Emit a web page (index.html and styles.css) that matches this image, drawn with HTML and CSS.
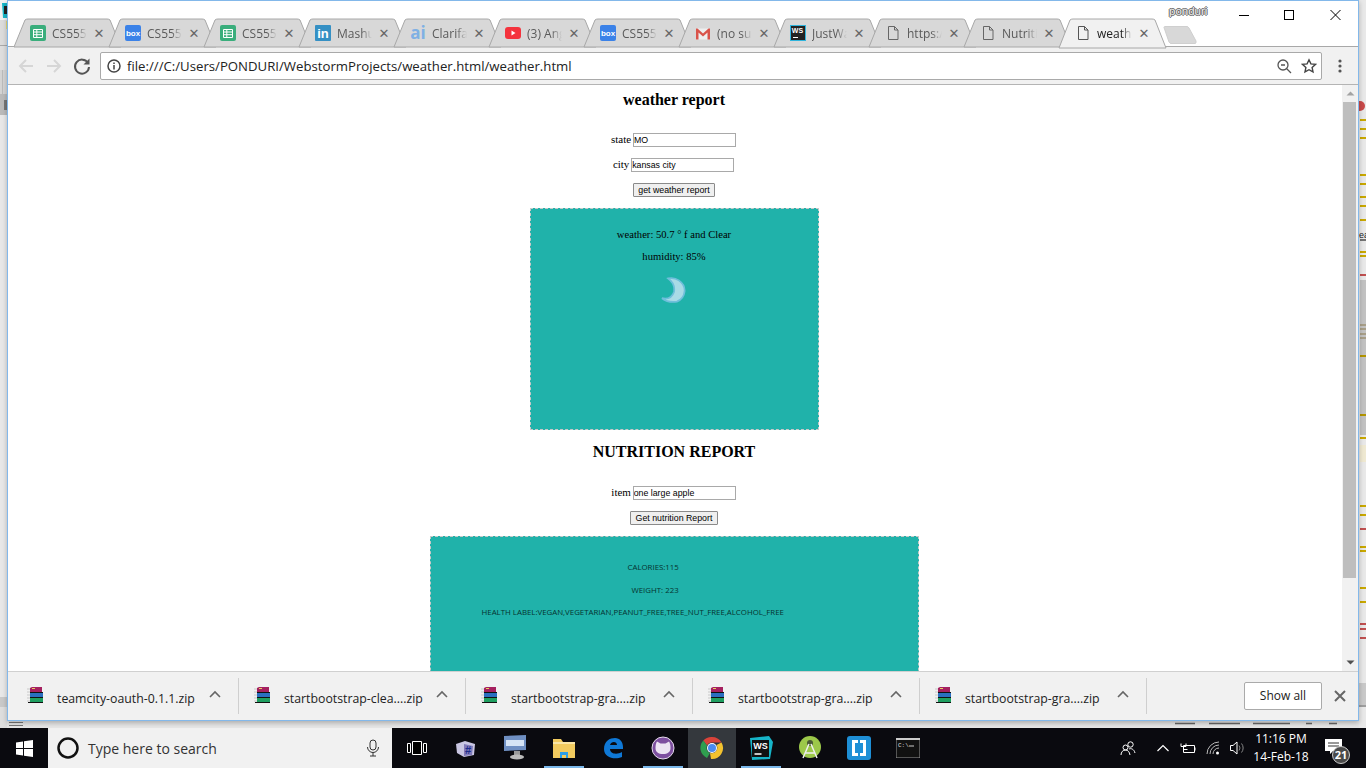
FILE: index.html
```html
<!DOCTYPE html>
<html lang="en">
<head>
<meta charset="utf-8">
<title>weather report</title>
<link rel="stylesheet" href="styles.css">
</head>
<body>
<div class="desktop">
  <svg class="left-strip" width="7" height="728" viewBox="0 0 7 728">
    <rect width="7" height="728" fill="#e8e8e8"/>
    <rect width="7" height="20" fill="#f2f2f2"/>
    <path d="M2 3h5v15H3z" fill="#17b6c9"/><rect x="4" y="6" width="3" height="8" fill="#222"/>
    <rect y="20" width="7" height="25" fill="#dcdcdc"/><rect x="6" y="21" width="1" height="8" fill="#e8d97a"/>
    <rect y="45" width="7" height="1" fill="#a9a9a9"/>
    <rect y="46" width="7" height="24" fill="#dedede"/>
    <rect y="70" width="7" height="24" fill="#d4d4d4"/><rect x="2" y="70" width="1" height="24" fill="#bbb"/>
    <rect y="94" width="7" height="21" fill="#bababa"/><rect x="4" y="100" width="3" height="10" fill="#777"/>
    <rect y="697" width="7" height="10" fill="#c9c9c9"/>
    <rect y="707" width="7" height="21" fill="#dedede"/>
  </svg>
  <div class="window">
    <div class="tabstrip">
      <div class="profile">ponduri</div>
      <div class="winctl">
        <svg width="124" height="16" viewBox="0 0 124 16"><path d="M5 8.500h10" stroke="#000" fill="none"/><rect x="50.500" y="3.500" width="9" height="9" stroke="#000" fill="none"/><path d="M96.500 3l10 10M106.500 3l-10 10" stroke="#000" fill="none"/></svg>
      </div>
      <div class="tab"><svg class="shape" viewBox="0 0 107 28"><path d="M0 28 L11 1 Q12 0 14 0 H93 Q95 0 96 1 L107 28Z" fill="#d8d8d8" stroke="#a8a8a8"/></svg>
        <svg class="fav" viewBox="0 0 16 16"><rect width="16" height="16" rx="2" fill="#3aae7c"/><path d="M3.500 4.500h9v8h-9zM3.500 7h9M3.500 9.700h9M6.800 4.500v8" fill="none" stroke="#fff"/></svg><span class="ttl">CS555</span><span class="x">✕</span></div>
      <div class="tab"><svg class="shape" viewBox="0 0 107 28"><path d="M0 28 L11 1 Q12 0 14 0 H93 Q95 0 96 1 L107 28Z" fill="#d8d8d8" stroke="#a8a8a8"/></svg>
        <svg class="fav" viewBox="0 0 16 16"><rect width="16" height="16" rx="2" fill="#3b82e8"/><text x="8" y="11" class="favt">box</text></svg><span class="ttl">CS555</span><span class="x">✕</span></div>
      <div class="tab"><svg class="shape" viewBox="0 0 107 28"><path d="M0 28 L11 1 Q12 0 14 0 H93 Q95 0 96 1 L107 28Z" fill="#d8d8d8" stroke="#a8a8a8"/></svg>
        <svg class="fav" viewBox="0 0 16 16"><rect width="16" height="16" rx="2" fill="#3aae7c"/><path d="M3.500 4.500h9v8h-9zM3.500 7h9M3.500 9.700h9M6.800 4.500v8" fill="none" stroke="#fff"/></svg><span class="ttl">CS555</span><span class="x">✕</span></div>
      <div class="tab"><svg class="shape" viewBox="0 0 107 28"><path d="M0 28 L11 1 Q12 0 14 0 H93 Q95 0 96 1 L107 28Z" fill="#d8d8d8" stroke="#a8a8a8"/></svg>
        <svg class="fav" viewBox="0 0 16 16"><rect width="16" height="16" rx="1" fill="#3590c4"/><text x="8" y="13" class="favin">in</text></svg><span class="ttl">Mashu</span><span class="x">✕</span></div>
      <div class="tab"><svg class="shape" viewBox="0 0 107 28"><path d="M0 28 L11 1 Q12 0 14 0 H93 Q95 0 96 1 L107 28Z" fill="#d8d8d8" stroke="#a8a8a8"/></svg>
        <svg class="fav" viewBox="0 0 16 16"><text x="8" y="14" class="favai">ai</text></svg><span class="ttl">Clarifa</span><span class="x">✕</span></div>
      <div class="tab"><svg class="shape" viewBox="0 0 107 28"><path d="M0 28 L11 1 Q12 0 14 0 H93 Q95 0 96 1 L107 28Z" fill="#d8d8d8" stroke="#a8a8a8"/></svg>
        <svg class="fav" viewBox="0 0 16 16"><rect y="2" width="16" height="12" rx="3" fill="#f4333d"/><path d="M6.500 5.500l4 2.500-4 2.500z" fill="#fff"/></svg><span class="ttl">(3) Ang</span><span class="x">✕</span></div>
      <div class="tab"><svg class="shape" viewBox="0 0 107 28"><path d="M0 28 L11 1 Q12 0 14 0 H93 Q95 0 96 1 L107 28Z" fill="#d8d8d8" stroke="#a8a8a8"/></svg>
        <svg class="fav" viewBox="0 0 16 16"><rect width="16" height="16" rx="2" fill="#3b82e8"/><text x="8" y="11" class="favt">box</text></svg><span class="ttl">CS555</span><span class="x">✕</span></div>
      <div class="tab"><svg class="shape" viewBox="0 0 107 28"><path d="M0 28 L11 1 Q12 0 14 0 H93 Q95 0 96 1 L107 28Z" fill="#d8d8d8" stroke="#a8a8a8"/></svg>
        <svg class="fav" viewBox="0 0 16 16"><path d="M1 3.500h14v11H1z" fill="#eee"/><path d="M1 14.500V3.500h1.500L8 8.500l5.500-5H15v11h-2.500V7.500L8 11.500 3.500 7.500v7z" fill="#d9534a"/></svg><span class="ttl">(no sul</span><span class="x">✕</span></div>
      <div class="tab"><svg class="shape" viewBox="0 0 107 28"><path d="M0 28 L11 1 Q12 0 14 0 H93 Q95 0 96 1 L107 28Z" fill="#d8d8d8" stroke="#a8a8a8"/></svg>
        <svg class="fav" viewBox="0 0 16 16"><rect width="16" height="16" fill="#2fb5dd"/><rect x="1" y="1" width="14" height="14" fill="#222"/><text x="7.500" y="8" class="favws">WS</text><path d="M3 12.500h5" stroke="#fff"/></svg><span class="ttl">JustWa</span><span class="x">✕</span></div>
      <div class="tab"><svg class="shape" viewBox="0 0 107 28"><path d="M0 28 L11 1 Q12 0 14 0 H93 Q95 0 96 1 L107 28Z" fill="#d8d8d8" stroke="#a8a8a8"/></svg>
        <svg class="fav" viewBox="0 0 16 16"><path d="M3.500 1.500h6l3.500 3.500v9.500H3.500zM9.500 1.500V5H13" fill="none" stroke="#666"/></svg><span class="ttl">https:/</span><span class="x">✕</span></div>
      <div class="tab"><svg class="shape" viewBox="0 0 107 28"><path d="M0 28 L11 1 Q12 0 14 0 H93 Q95 0 96 1 L107 28Z" fill="#d8d8d8" stroke="#a8a8a8"/></svg>
        <svg class="fav" viewBox="0 0 16 16"><path d="M3.500 1.500h6l3.500 3.500v9.500H3.500zM9.500 1.500V5H13" fill="none" stroke="#666"/></svg><span class="ttl">Nutriti</span><span class="x">✕</span></div>
      <div class="tab active"><svg class="shape" viewBox="0 0 107 28"><path d="M0 29 L11 1 Q12 0 14 0 H93 Q95 0 96 1 L107 29Z" fill="#f1f1f1" stroke="#a8a8a8"/></svg>
        <svg class="fav" viewBox="0 0 16 16"><path d="M3.500 1.500h6l3.500 3.500v9.500H3.500zM9.500 1.500V5H13" fill="none" stroke="#555"/></svg><span class="ttl">weath</span><span class="x">✕</span></div>
      <svg class="newtab" width="36" height="19" viewBox="0 0 36 19"><path d="M2 1.500Q2 .500 3 .500H25Q26 .500 27 2L34 15Q34.500 17.500 33 17.500H9Q8 17.500 7 16Z" fill="#d8d8d8" stroke="#cfcfcf"/></svg>
    </div>
    <div class="toolbar">
      <svg class="navi" width="20" height="20" viewBox="0 0 20 20"><path d="M17 10H4M10 4l-6 6 6 6" fill="none" stroke="#d6d6d6" stroke-width="2"/></svg>
      <svg class="navi" width="20" height="20" viewBox="0 0 20 20"><path d="M3 10h13M10 4l6 6-6 6" fill="none" stroke="#d6d6d6" stroke-width="2"/></svg>
      <svg class="navi" width="20" height="20" viewBox="0 0 20 20"><path d="M16 7A7 7 0 1 0 17 11" fill="none" stroke="#555" stroke-width="2"/><path d="M17.500 2.500V8.500H11.500z" fill="#555"/></svg>
      <div class="omnibox">
        <svg width="16" height="16" viewBox="0 0 16 16"><circle cx="8" cy="8" r="6" fill="none" stroke="#444" stroke-width="1.500"/><path d="M8 7v4.500M8 4.500v1.500" stroke="#444" stroke-width="1.500"/></svg>
        <span class="url">file:///C:/Users/PONDURI/WebstormProjects/weather.html/weather.html</span>
        <svg class="zoomi" width="16" height="16" viewBox="0 0 16 16"><circle cx="7" cy="7" r="5" fill="none" stroke="#555" stroke-width="1.300"/><path d="M5 7h4M10.500 10.500L15 15" stroke="#555" stroke-width="1.300"/></svg>
        <svg width="16" height="16" viewBox="0 0 16 16"><path d="M8 1.800l1.900 4.100 4.500.500-3.300 3 .900 4.500L8 11.700l-4 2.200.900-4.500-3.300-3 4.500-.500z" fill="none" stroke="#444" stroke-width="1.400"/></svg>
      </div>
      <svg class="menu" width="4" height="16" viewBox="0 0 4 16"><circle cx="2" cy="3" r="1.600" fill="#555"/><circle cx="2" cy="8" r="1.600" fill="#555"/><circle cx="2" cy="13" r="1.600" fill="#555"/></svg>
    </div>
    <div class="viewport">
      <main class="page">
        <h3 class="title first">weather report</h3>
        <p class="field"><label>state</label> <input class="inp" value="MO"></p>
        <p class="field"><label>city</label> <input class="inp" value="kansas city"></p>
        <p class="field"><button class="btn">get weather report</button></p>
        <section class="panel weather">
          <p class="wline">weather: 50.7 ° f and Clear</p>
          <p class="wline">humidity: 85%</p>
          <svg class="moon" width="28" height="28" viewBox="0 0 28 28"><path d="M8 1.500Q14 0 19 3.500Q25.500 8 25 15Q24 23 17 25.500Q8 27 1.500 22Q11 24 14 15.500Q15.500 7 8 1.500Z" fill="#a9dbe6" stroke="#6fbfdb" stroke-width="1.800"/></svg>
        </section>
        <h3 class="title second">NUTRITION REPORT</h3>
        <p class="field item"><label>item</label> <input class="inp" value="one large apple"></p>
        <p class="field"><button class="btn">Get nutrition Report</button></p>
        <section class="panel nutrition">
          <p class="nline cal">CALORIES:115</p>
          <p class="nline wei">WEIGHT: 223</p>
          <p class="nline hea">HEALTH LABEL:VEGAN,VEGETARIAN,PEANUT_FREE,TREE_NUT_FREE,ALCOHOL_FREE</p>
        </section>
      </main>
      <div class="scrollbar">
        <svg width="17" height="17" viewBox="0 0 17 17"><path d="M4.500 10.500L8.500 6.500l4 4z" fill="#a3a3a3"/></svg>
        <div class="track"><div class="thumb"></div></div>
        <svg width="17" height="17" viewBox="0 0 17 17"><path d="M4.500 6.500h8l-4 4z" fill="#505050"/></svg>
      </div>
    </div>
    <div class="downloads">
      <div class="dl"><svg class="rar" width="16" height="16" viewBox="0 0 16 16"><path d="M3 1l2-1h10v5H3z" fill="#a5205f"/><path d="M5 1h3v1H5z" fill="#e8d060"/><path d="M3 6h13v4H3z" fill="#2a6fc0"/><path d="M3 11h13v4H3z" fill="#1f9f60"/><path d="M1 5.500h15M1 10.500h15M1 15.500h15" stroke="#111"/><path d="M1.500 1v14" stroke="#ddd" stroke-width="3" stroke-dasharray="2 1"/></svg><span class="dlname">teamcity-oauth-0.1.1.zip</span><svg class="chev" width="12" height="8" viewBox="0 0 12 8"><path d="M1 7l5-5 5 5" fill="none" stroke="#666" stroke-width="1.600"/></svg></div>
      <div class="dl"><svg class="rar" width="16" height="16" viewBox="0 0 16 16"><path d="M3 1l2-1h10v5H3z" fill="#a5205f"/><path d="M5 1h3v1H5z" fill="#e8d060"/><path d="M3 6h13v4H3z" fill="#2a6fc0"/><path d="M3 11h13v4H3z" fill="#1f9f60"/><path d="M1 5.500h15M1 10.500h15M1 15.500h15" stroke="#111"/><path d="M1.500 1v14" stroke="#ddd" stroke-width="3" stroke-dasharray="2 1"/></svg><span class="dlname">startbootstrap-clea....zip</span><svg class="chev" width="12" height="8" viewBox="0 0 12 8"><path d="M1 7l5-5 5 5" fill="none" stroke="#666" stroke-width="1.600"/></svg></div>
      <div class="dl"><svg class="rar" width="16" height="16" viewBox="0 0 16 16"><path d="M3 1l2-1h10v5H3z" fill="#a5205f"/><path d="M5 1h3v1H5z" fill="#e8d060"/><path d="M3 6h13v4H3z" fill="#2a6fc0"/><path d="M3 11h13v4H3z" fill="#1f9f60"/><path d="M1 5.500h15M1 10.500h15M1 15.500h15" stroke="#111"/><path d="M1.500 1v14" stroke="#ddd" stroke-width="3" stroke-dasharray="2 1"/></svg><span class="dlname">startbootstrap-gra....zip</span><svg class="chev" width="12" height="8" viewBox="0 0 12 8"><path d="M1 7l5-5 5 5" fill="none" stroke="#666" stroke-width="1.600"/></svg></div>
      <div class="dl"><svg class="rar" width="16" height="16" viewBox="0 0 16 16"><path d="M3 1l2-1h10v5H3z" fill="#a5205f"/><path d="M5 1h3v1H5z" fill="#e8d060"/><path d="M3 6h13v4H3z" fill="#2a6fc0"/><path d="M3 11h13v4H3z" fill="#1f9f60"/><path d="M1 5.500h15M1 10.500h15M1 15.500h15" stroke="#111"/><path d="M1.500 1v14" stroke="#ddd" stroke-width="3" stroke-dasharray="2 1"/></svg><span class="dlname">startbootstrap-gra....zip</span><svg class="chev" width="12" height="8" viewBox="0 0 12 8"><path d="M1 7l5-5 5 5" fill="none" stroke="#666" stroke-width="1.600"/></svg></div>
      <div class="dl"><svg class="rar" width="16" height="16" viewBox="0 0 16 16"><path d="M3 1l2-1h10v5H3z" fill="#a5205f"/><path d="M5 1h3v1H5z" fill="#e8d060"/><path d="M3 6h13v4H3z" fill="#2a6fc0"/><path d="M3 11h13v4H3z" fill="#1f9f60"/><path d="M1 5.500h15M1 10.500h15M1 15.500h15" stroke="#111"/><path d="M1.500 1v14" stroke="#ddd" stroke-width="3" stroke-dasharray="2 1"/></svg><span class="dlname">startbootstrap-gra....zip</span><svg class="chev" width="12" height="8" viewBox="0 0 12 8"><path d="M1 7l5-5 5 5" fill="none" stroke="#666" stroke-width="1.600"/></svg></div>
      <div class="dlright">
        <div class="showall">Show all</div>
        <svg width="12" height="12" viewBox="0 0 12 12"><path d="M1 1l10 10M11 1L1 11" stroke="#666" stroke-width="2"/></svg>
      </div>
    </div>
  </div>
  <svg class="right-strip" width="7" height="728" viewBox="0 0 7 728">
    <rect width="7" height="728" fill="#e9e9e9"/>
    <circle cx="1" cy="106" r="5" fill="#c94a4a"/>
    <path d="M1 120h6M1 129h6M1 138h6M1 175h6M1 184h6M1 197h6M1 206h6M1 220h6M1 252h6M1 256h6M1 438h6M1 506h6M1 515h6M1 547h6M1 551h6M1 588h6M1 602h6" stroke="#c9a800" stroke-width="2"/>
    <path d="M1 275h6M1 529h6M1 624h6M1 629h6M1 638h6" stroke="#c05050" stroke-width="2"/>
    <rect x="1" y="280" width="6" height="155" fill="#c2c2c2"/>
    <path d="M1 325h6M1 329h6M1 334h6M1 338h6" stroke="#a89f88" stroke-width="2"/>
    <path d="M1 356h6M1 415h6" stroke="#b39500" stroke-width="2"/>
    <rect x="1" y="445" width="6" height="17" fill="#efe9d2"/>
    <path d="M1 240h6" stroke="#000" stroke-width="1"/>
    <text x="0" y="238" class="striptxt">ea</text>
    <rect y="683" width="7" height="22" fill="#c9c9c9"/>
    <path d="M0 706h7" stroke="#555"/>
  </svg>
  <svg class="under" width="1366" height="7" viewBox="0 0 1366 7">
    <path d="M9 1.500h14M9 4.500h14" stroke="#777"/>
    <path d="M1175 2.500h20M1209 2.500h31M1253 2.500h37M1306 2.500h6M1329 2.500h8" stroke="#666" stroke-width="1.500"/>
  </svg>
</div>
<footer class="taskbar">
  <div class="startb"><svg width="17" height="17" viewBox="0 0 17 17"><path d="M0 2.500l7-1v6.500H0zM8 1.300l9-1.300v8H8zM0 9h7v6.500l-7-1zM8 9h9v8l-9-1.300z" fill="#fff"/></svg></div>
  <div class="search">
    <svg width="24" height="24" viewBox="0 0 24 24"><circle cx="12" cy="12" r="9.500" fill="none" stroke="#111" stroke-width="2.500"/></svg>
    <span class="searchtxt">Type here to search</span>
    <svg class="mic" width="14" height="18" viewBox="0 0 14 18"><rect x="4" y="1" width="6" height="10" rx="3" fill="none" stroke="#333"/><path d="M1.500 8a5.500 5.500 0 0 0 11 0M7 13.500V17M4 17h6" fill="none" stroke="#333"/></svg>
  </div>
  <div class="tbicons">
    <div class="tbi"><svg width="20" height="14" viewBox="0 0 20 14"><path d="M.5 2.500h3v9h-3zM5.500.500h9v13h-9zM16.500 2.500h3v9h-3z" fill="#000" stroke="#fff"/></svg></div>
    <div class="tbi"><svg width="24" height="24" viewBox="0 0 24 24"><path d="M2 8l9-3 10 3-1 11-10 2-7-4z" fill="#c9c6e2"/><path d="M10 8l9 2-1 9-8 1z" fill="#7f79b8"/><text x="14" y="18" class="hash">#</text></svg></div>
    <div class="tbi"><svg width="26" height="28" viewBox="0 0 26 28"><path d="M2 2l22-1v15L2 17z" fill="#6f8fc2"/><path d="M4 6h18v6H4z" fill="#d6e4f5"/><path d="M12 17h6v4h-6z" fill="#999"/><ellipse cx="15" cy="23" rx="7" ry="2.500" fill="#bbb"/></svg></div>
    <div class="tbi line"><svg width="24" height="22" viewBox="0 0 24 22"><path d="M1 2h8l2 3h12v16H1z" fill="#f2cb5f"/><path d="M1 5h22v2H1z" fill="#fae6a6"/><path d="M8 15h8v6H8z" fill="#2c9ee8"/><path d="M10 18h4v3h-4z" fill="#f2cb5f"/></svg></div>
    <div class="tbi"><svg width="22" height="22" viewBox="0 0 22 22"><path d="M2 12C2 4 8 1 13 1c5 0 8 4 8 9v2H8c0 5 7 6 12 3v5c-7 3-18 1-18-8zM8 8h7c0-4-6-4-7 0z" fill="#0f78d6"/></svg></div>
    <div class="tbi line"><svg width="24" height="24" viewBox="0 0 24 24"><circle cx="12" cy="12" r="11" fill="#7d4f9f" stroke="#e5dcec" stroke-width="1"/><path d="M4.500 12c0-3 .5-5 1.500-6.500l3.500 2h5l3.500-2c1 1.500 1.500 3.500 1.500 6.500 0 4-3 6-7.500 6S4.500 16 4.500 12z" fill="#ece4f2"/></svg></div>
    <div class="tbi chrome"><svg width="24" height="24" viewBox="0 0 24 24"><path d="M12 1a11 11 0 0 1 9.500 5.500H12a5.500 5.500 0 0 0-5 3L3.300 4.500A11 11 0 0 1 12 1z" fill="#d9433a"/><path d="M3.300 4.500L7 9.500a5.500 5.500 0 0 0 3 7.500L7 22A11 11 0 0 1 3.300 4.500z" fill="#2f9e4f"/><path d="M21.500 6.500A11 11 0 0 1 11 23l-1-6a5.500 5.500 0 0 0 6.500-8z" fill="#f3c22f"/><circle cx="12" cy="12" r="5" fill="#fff"/><circle cx="12" cy="12" r="4" fill="#4b8bf0"/></svg></div>
    <div class="tbi line"><svg width="26" height="26" viewBox="0 0 26 26"><path d="M2 3l19-2 4 6-3 17-18 1z" fill="#16b4c8"/><rect x="4" y="5" width="17" height="17" fill="#111"/><text x="12.500" y="14" class="tbws">WS</text><path d="M6.500 19h7" stroke="#fff" stroke-width="1.500"/></svg></div>
    <div class="tbi"><svg width="24" height="26" viewBox="0 0 24 26"><circle cx="12" cy="12" r="11" fill="#9cc84a"/><circle cx="12" cy="8" r="3" fill="#4a5a35"/><path d="M11 9l-6 14M13 9l6 14M7 18h10" stroke="#eee" stroke-width="1.500" fill="none"/></svg></div>
    <div class="tbi"><svg width="24" height="24" viewBox="0 0 24 24"><rect width="24" height="24" rx="3" fill="#1e8fd6"/><path d="M5 4h6v16H5zM13 4h6v16h-6z" fill="#fff"/><path d="M8 7h3v10H8zM13 7h3v10h-3z" fill="#1e8fd6"/></svg></div>
    <div class="tbi"><svg width="24" height="20" viewBox="0 0 24 20"><rect width="24" height="20" fill="#111" stroke="#999"/><rect width="24" height="2" fill="#ccc"/><text x="2" y="9" class="cmdt">C:\</text><path d="M13 8h5" stroke="#ccc"/></svg></div>
  </div>
  <div class="tray">
    <svg class="tr-people" width="16" height="16" viewBox="0 0 16 16"><circle cx="10.500" cy="4.500" r="2.700" fill="none" stroke="#fff"/><circle cx="5.500" cy="7.500" r="2.500" fill="none" stroke="#fff"/><path d="M1 15c0-3 2-5 4.500-5s4 2 4.500 5M9 9c2-1 5 0 6 4" fill="none" stroke="#fff"/></svg>
    <svg class="tr-chev" width="12" height="8" viewBox="0 0 12 8"><path d="M.5 7L6 1.500 11.500 7" fill="none" stroke="#fff" stroke-width="1.200"/></svg>
    <svg class="tr-batt" width="16" height="12" viewBox="0 0 16 12"><path d="M3.500 3.500h11v7h-11z" fill="none" stroke="#fff"/><path d="M15 5.500v3" stroke="#fff"/><path d="M1 1.500v3h5v-3M3.500 4.500v3h4" fill="none" stroke="#fff"/></svg>
    <svg class="tr-wifi" width="14" height="14" viewBox="0 0 14 14"><path d="M1 13a12 12 0 0 1 12-12M4 13a9 9 0 0 1 9-9M7 13a6 6 0 0 1 6-6" fill="none" stroke="#bbb"/><circle cx="11.500" cy="12" r="1.500" fill="#fff"/></svg>
    <svg class="tr-vol" width="16" height="14" viewBox="0 0 16 14"><path d="M1.500 4.500h2.500L8 1v12L4 9.500H1.500z" fill="none" stroke="#fff"/><path d="M10 4.500a4 4 0 0 1 0 5M12.500 2.500a7 7 0 0 1 0 9" fill="none" stroke="#888"/></svg>
    <div class="clock"><span>11:16 PM</span><span>14-Feb-18</span></div>
    <div class="notif">
      <svg width="18" height="15" viewBox="0 0 18 15"><path d="M0 0h17v12H8l-3 3v-3H0z" fill="#fff"/><path d="M3 4h11M3 7h11" stroke="#333"/></svg>
      <span class="badge">21</span>
    </div>
  </div>
</footer>
</body>
</html>
```
FILE: styles.css
```css
* { box-sizing: border-box; }
html, body { margin: 0; padding: 0; }
body { width: 1366px; height: 768px; overflow: hidden; background: #000; display: flex; flex-direction: column; font-family: "Liberation Sans", Arial, sans-serif; }
p, h3 { margin: 0; }

.desktop { position: relative; display: flex; height: 728px; background: #e6e6e6; }
.left-strip { display: block; width: 7px; flex: none; }
.right-strip { display: block; width: 7px; flex: none; }
.under { position: absolute; left: 0; top: 721px; }
.striptxt { font: 9px "Liberation Sans", sans-serif; fill: #222; }

.window { width: 1352px; height: 721px; border: 1px solid #83b8ea; display: flex; flex-direction: column; background: #fff; box-shadow: 0 2px 5px rgba(0,0,0,.25); position: relative; z-index: 1; }

.tabstrip { position: relative; height: 46px; padding: 18px 0 0 6px; display: flex; background: #fff; border-bottom: 1px solid #a8a8a8; flex: none; }
.profile { position: absolute; left: 1161px; top: 4px; font-size: 11.500px; color: #eee; text-shadow: -1px 0 0 #666, 1px 0 0 #666, 0 -1px 0 #666, 0 1px 0 #666; }
.winctl { position: absolute; right: 0; top: 6px; width: 124px; height: 16px; overflow: hidden; }
.winctl svg { display: block; }

.tab { position: relative; width: 107px; height: 28px; margin-right: -12px; display: flex; align-items: center; padding: 0 0 0 16px; flex: none; }
.tab .shape { position: absolute; left: 0; top: 0; width: 107px; height: 28px; overflow: visible; }
.tab.active { z-index: 2; }
.fav { position: relative; width: 16px; height: 16px; flex: none; overflow: visible; }
.favt { font: bold 8px "Liberation Sans", sans-serif; fill: #fff; text-anchor: middle; }
.favin { font: bold 13px "Liberation Sans", sans-serif; fill: #fff; text-anchor: middle; }
.favai { font: bold 17px "Open Sans", sans-serif; fill: #7fb0e4; text-anchor: middle; }
.favws { font: bold 7px "Liberation Sans", sans-serif; fill: #fff; text-anchor: middle; }
.ttl { position: relative; margin-left: 6px; width: 35px; overflow: hidden; white-space: nowrap; font: 12px "Open Sans", sans-serif; color: #5a5a5a; -webkit-mask-image: linear-gradient(90deg, #000 70%, transparent); mask-image: linear-gradient(90deg, #000 70%, transparent); }
.active .ttl { color: #222; }
.x { position: relative; margin-left: 6px; font: bold 13px "DejaVu Sans", sans-serif; color: #666; width: 12px; text-align: center; }
.newtab { position: relative; margin: 7px 0 0 8px; flex: none; }

.toolbar { height: 38px; flex: none; background: #f1f1f1; border-bottom: 1px solid #b4b4b4; display: flex; align-items: center; padding: 0 0 0 8px; }
.navi { margin-right: 8px; flex: none; }
.omnibox { width: 1222px; height: 28px; background: #fff; border: 1px solid #a9a9a9; border-radius: 2px; display: flex; align-items: center; padding: 0 4px 0 5px; }
.url { margin-left: 5px; font: 13.200px "Open Sans", sans-serif; color: #222; flex: 1; white-space: nowrap; }
.zoomi { margin-right: 9px; }
.menu { margin-left: 16px; flex: none; }

.viewport { height: 586px; flex: none; display: flex; overflow: hidden; background: #fff; }
.page { width: 1334px; flex: none; padding-right: 2px; text-align: center; font-family: "Liberation Serif", "Times New Roman", serif; color: #000; }
.title { font-size: 16px; font-weight: bold; line-height: 18px; }
.title.first { margin-top: 6px; }
.title.second { margin-top: 13px; }
.field { font-size: 11px; line-height: 15px; margin-top: 10px; }
.first + .field { margin-top: 23px; }
.field.item { margin-top: 24px; }
.inp { width: 103px; height: 14px; margin: 0 1px 0 -1px; border: 1px solid #a9a9a9; padding: 0; font: 8.800px "Liberation Sans", sans-serif; color: #000; vertical-align: baseline; background: #fff; border-radius: 0; }
.btn { height: 14px; padding: 0 4.500px; font: 8.800px "Liberation Sans", sans-serif; color: #000; background: #efefef; border: 1px solid #8a8a8a; border-radius: 1px; }
.panel { background: #20b2aa; border: 1px dashed #c9c9c9; margin-left: auto; margin-right: auto; }
.weather { width: 289px; height: 222px; margin-top: 11px; padding-top: 19px; font-size: 10.600px; }
.wline { line-height: 13px; margin-bottom: 9px; }
.moon { display: block; margin: 14px auto 0; width: 28px; height: 27px; }
.nutrition { width: 489px; height: 170px; margin-top: 11px; padding-top: 25px; font: 7.850px "Open Sans", sans-serif; text-align: left; color: #063330; }
.nline { line-height: 11px; margin-bottom: 12px; white-space: nowrap; }
.cal { margin-left: 197px; }
.wei { margin-left: 201px; margin-bottom: 11px; }
.hea { margin-left: 51px; }

.scrollbar { width: 16px; flex: none; background: #f1f1f1; display: flex; flex-direction: column; }
.scrollbar svg { flex: none; }
.track { flex: 1; padding: 0 2px 76px 1px; display: flex; }
.thumb { flex: 1; background: #bebebe; }

.downloads { flex: 1; background: #f1f1f1; border-top: 1px solid #d0d0d0; display: flex; align-items: center; padding-left: 4px; }
.dl { width: 227px; height: 36px; border-right: 1px solid #cfcfcf; display: flex; align-items: center; padding-left: 15px; flex: none; }
.rar { flex: none; margin-top: -2px; }
.dlname { margin: 4px 0 0 14px; width: 145px; font: 12.300px "Open Sans", sans-serif; color: #222; white-space: nowrap; }
.chev { margin-left: 7px; margin-top: -5px; flex: none; }
.dlright { flex: 1; display: flex; align-items: center; justify-content: flex-end; padding-right: 12px; gap: 12px; }
.showall { width: 78px; height: 28px; background: #fff; border: 1px solid #aaa; border-radius: 2px; font: 12px "Open Sans", sans-serif; color: #222; text-align: center; line-height: 25px; }

.taskbar { height: 40px; display: flex; background: #0a0a0f; flex: none; align-items: stretch; }
.startb { width: 48px; display: flex; align-items: center; justify-content: center; }
.search { width: 344px; background: #f1f1f1; display: flex; align-items: center; padding: 0 12px 0 8px; }
.searchtxt { margin-left: 8px; font: 14px "Open Sans", sans-serif; color: #333; flex: 1; }
.tbicons { display: flex; }
.tbi { width: 49.200px; display: flex; align-items: center; justify-content: center; }
.tbi.line { background: linear-gradient(#7ab7ea, #7ab7ea) center bottom / 40px 2px no-repeat; }
.tbi.chrome { background: #34383d; width: 48px; margin: 0 .6px; }
.hash { font: bold 11px "Liberation Sans", sans-serif; fill: #1a2a8a; text-anchor: middle; }
.tbws { font: bold 9px "Liberation Sans", sans-serif; fill: #fff; text-anchor: middle; }
.cmdt { font: 6px "Liberation Mono", monospace; fill: #ddd; }
.tray { flex: 1; display: flex; align-items: center; justify-content: flex-end; color: #fff; }
.tray svg { flex: none; }
.tr-people { margin-right: 21px; }
.tr-chev { margin-right: 11px; }
.tr-batt { margin-right: 10px; }
.tr-wifi { margin-right: 9px; }
.tr-vol { margin-right: 1px; }
.clock { width: 70px; display: flex; flex-direction: column; align-items: center; font: 12px/18px "Open Sans", sans-serif; }
.notif { position: relative; width: 50px; height: 40px; display: flex; align-items: center; padding: 0 0 4px 9px; }
.badge { position: absolute; left: 16px; top: 18px; width: 18px; height: 18px; border-radius: 50%; background: #4a4a4a; border: 1px solid #ccc; font: bold 11px/16px "Open Sans", sans-serif; text-align: center; color: #fff; }
```
